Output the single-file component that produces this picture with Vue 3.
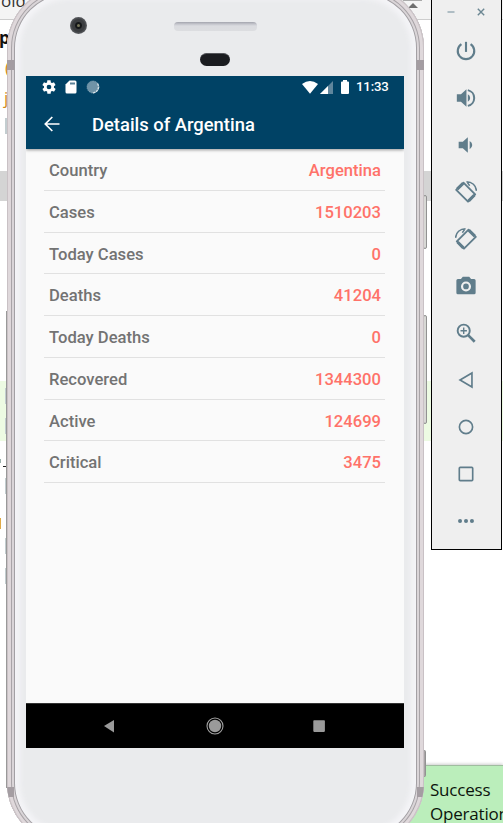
<script setup>
const stats = [
  ['Country', 'Argentina'],
  ['Cases', '1510203'],
  ['Today Cases', '0'],
  ['Deaths', '41204'],
  ['Today Deaths', '0'],
  ['Recovered', '1344300'],
  ['Active', '124699'],
  ['Critical', '3475'],
]
</script>

<template>
  <main class="desktop">
    <!-- Editor window behind the emulator -->
    <section class="editor">
      <div class="tabstrip"><span>old</span></div>
      <div class="code"></div>
      <div class="band gray"></div>
      <div class="gap"></div>
      <div class="band green"></div>
    </section>
    <span class="frag bold">p</span>
    <span class="frag amber paren">(</span>
    <span class="frag amber jay">j</span>
    <i class="mark m1"></i><i class="mark m2"></i><i class="mark m3"></i>
    <i class="mark m4"></i><i class="mark m5"></i><i class="mark m6"></i>
    <i class="dash"></i><i class="tick"></i><i class="amberbit"></i><i class="divider"></i>
    <svg class="collapse" width="22" height="10" viewBox="0 0 22 10">
      <path d="M3 .5h19" stroke="#aaa" />
      <path d="M8 8l5-5 5 5z" fill="#6e6e6e" />
    </svg>
    <aside class="toast">Success<br>Operation</aside>

    <!-- Phone -->
    <i class="key k1"></i><i class="key k2"></i><i class="key k3"></i>
    <section class="phone">
      <i class="antenna tl"></i><i class="antenna tr"></i>
      <i class="antenna bl"></i><i class="antenna br"></i>
    </section>
    <div class="camera"><i></i></div>
    <div class="speaker"></div>
    <div class="sensor"></div>

    <section class="screen">
      <header class="header">
        <div class="status">
          <svg class="s-gear" width="16" height="16" viewBox="0 0 24 24"><path fill="#fff" d="M19.4 13c0-.3.1-.6.1-1s0-.7-.1-1l2.100-1.600c.2-.2.2-.4.1-.6l-2-3.500c-.1-.2-.4-.3-.6-.2l-2.500 1c-.5-.4-1.100-.7-1.700-1L14.400 2.400c0-.2-.2-.4-.5-.4h-4c-.2 0-.4.2-.5.4L9.100 5.100c-.6.3-1.200.6-1.700 1l-2.500-1c-.2-.1-.5 0-.6.2l-2 3.500c-.1.2-.1.5.1.6L4.600 11c0 .3-.1.600-.1 1s0 .7.1 1l-2.100 1.600c-.2.2-.2.4-.1.6l2 3.500c.1.2.4.3.6.2l2.500-1c.5.4 1.100.7 1.700 1l.3 2.700c.1.2.3.4.5.4h4c.3 0 .5-.2.5-.4l.4-2.700c.6-.3 1.200-.6 1.700-1l2.500 1c.2.1.5 0 .6-.2l2-3.500c.1-.2.1-.4-.1-.6zM12 15.500a3.500 3.500 0 1 1 0-7 3.500 3.500 0 0 1 0 7z" /></svg>
          <svg class="s-sd" width="12" height="14" viewBox="0 0 12 14"><path d="M4.500.5H10q1.500 0 1.500 1.500v10q0 1.500-1.500 1.500H2Q.5 13.500.5 12V4.500z" fill="#fff" /><path d="M5 2.500h5V4.500H5z" fill="#5b8299" /></svg>
          <svg class="s-sync" width="14" height="14" viewBox="0 0 14 14"><circle cx="7" cy="7" r="6" fill="#6f93a7" /><path d="M11.500 3.500A6 6 0 0 1 6 12.800" fill="none" stroke="#dfe8ec" stroke-width="1.300" stroke-dasharray="2.500 .8" /><circle cx="7" cy="7" r="6" fill="none" stroke="#a8bfcb" stroke-width=".7" stroke-dasharray="1 1" /></svg>
          <span class="spacer"></span>
          <svg class="s-wifi" width="16" height="13" viewBox="0 0 16 13"><path d="M0 3Q8-2.800 16 3L8 12.800z" fill="#fff" /></svg>
          <svg class="s-cell" width="13" height="13" viewBox="0 0 13 13"><path d="M0 13L13 0v13z" fill="#5f869d" /><path d="M0 13L8 5v8z" fill="#fff" /></svg>
          <svg class="s-batt" width="8" height="14" viewBox="0 0 8 14"><path d="M2 0h4v1.500h1q1 0 1 1V13q0 1-1 1H1q-1 0-1-1V2.500q0-1 1-1h1z" fill="#fff" /></svg>
          <time>11:33</time>
        </div>
        <div class="appbar">
          <svg width="16" height="16" viewBox="0 0 16 16" fill="none" stroke="#fff" stroke-width="1.700"><path d="M15.500 8H2M8.300 1L1.300 8l7 7" /></svg>
          <h1>Details of Argentina</h1>
        </div>
      </header>
      <div class="list">
        <div v-for="[label, value] in stats" :key="label" class="row">
          <span>{{ label }}</span><b>{{ value }}</b>
        </div>
      </div>
      <nav class="nav">
        <svg width="18" height="18" viewBox="0 0 18 18"><path d="M3 9l10-6v12.500z" fill="#9a9a9a" /></svg>
        <svg width="18" height="18" viewBox="0 0 18 18"><circle cx="9" cy="9" r="8" fill="none" stroke="#a2a2a2" stroke-width="1.100" /><circle cx="9" cy="9" r="6.200" fill="#9a9a9a" /></svg>
        <svg width="18" height="18" viewBox="0 0 18 18"><rect x="3.300" y="3.300" width="11.600" height="11.600" rx=".8" fill="#9a9a9a" /></svg>
      </nav>
    </section>

    <!-- Emulator controls -->
    <aside class="tools">
      <div class="winbtns">
        <svg width="8" height="8" viewBox="0 0 8 8"><path d="M.5 4h7" stroke="#9fb1ba" stroke-width="1.600" /></svg>
        <svg width="8" height="8" viewBox="0 0 8 8"><path d="M.8.800l6.400 6.400M7.200.800L.8 7.200" stroke="#6c8793" stroke-width="1.400" /></svg>
      </div>
      <svg viewBox="0 0 24 24"><g fill="none" stroke="#607d8b" stroke-width="2.300"><path d="M12 2v11" /><path d="M7 4.400a9 9 0 1 0 10 0" /></g></svg>
      <svg viewBox="0 0 24 24"><path fill="#607d8b" d="M2 8h4.500L12.500 2.500v19L6.500 16H2zM14 8a4.400 4.400 0 0 1 0 8z" /><path d="M14 3.400a8.800 8.800 0 0 1 0 17.200" fill="none" stroke="#607d8b" stroke-width="2.200" /></svg>
      <svg viewBox="0 0 24 24"><path fill="#607d8b" d="M4 8.500h4.500L14 3.500v17l-5.500-5H4zM16 7.500a5 5 0 0 1 0 9z" /></svg>
      <svg viewBox="0 0 24 24"><g fill="none" stroke="#607d8b"><path stroke-width="2" d="M1.300 9.700L9.200 1.800 22 14.700 14.200 22.600z" stroke-linejoin="round" /><path stroke-width="3.400" d="M2.400 8.900l6.400-6.300M14.900 21.700l6.300-6.400" /><path stroke-width="1.600" d="M12.500.8c6 0 10.600 4.200 10.900 10M16 5.200l-2.800-4" /></g></svg>
      <svg viewBox="0 0 24 24"><g fill="none" stroke="#607d8b"><path stroke-width="2" d="M22.700 9.700L14.800 1.800 2 14.700 9.800 22.600z" stroke-linejoin="round" /><path stroke-width="3.400" d="M21.600 8.900l-6.400-6.300M9.100 21.700l-6.300-6.400" /><path stroke-width="1.600" d="M11.500.8C5.500.8.900 5 .6 10.800M8 5.200l2.800-4" /></g></svg>
      <svg viewBox="0 0 24 24"><path fill="#607d8b" d="M8.500 2h7l2 2.400h3.300q1.700 0 1.700 1.700v13.200q0 1.700-1.700 1.700H3.200q-1.700 0-1.700-1.700V6.100q0-1.700 1.700-1.700h3.300z" /><circle cx="12" cy="12.500" r="4.300" fill="none" stroke="#efefef" stroke-width="2.400" /></svg>
      <svg viewBox="0 0 24 24"><g fill="none" stroke="#607d8b"><circle cx="9.500" cy="9.500" r="6.600" stroke-width="2.100" /><path d="M14.300 14.300l7.200 7.200" stroke-width="2.900" /><path d="M6 9.500h7M9.500 6v7" stroke-width="1.500" /></g></svg>
      <svg viewBox="0 0 24 24"><path d="M5.500 12L18.500 4.300v15.400z" fill="none" stroke="#607d8b" stroke-width="1.800" /></svg>
      <svg viewBox="0 0 24 24"><circle cx="12" cy="12" r="7.200" fill="none" stroke="#607d8b" stroke-width="1.800" /></svg>
      <svg viewBox="0 0 24 24"><rect x="4.700" y="4.700" width="14.600" height="14.600" rx="1" fill="none" stroke="#607d8b" stroke-width="1.800" /></svg>
      <svg viewBox="0 0 24 24"><g fill="#607d8b"><circle cx="5.500" cy="12" r="2.200" /><circle cx="12" cy="12" r="2.200" /><circle cx="18.500" cy="12" r="2.200" /></g></svg>
    </aside>
  </main>
</template>

<style>
body { margin: 0; overflow: hidden; }
</style>

<style scoped>
* { box-sizing: border-box; }
svg { display: block; flex: none; }
.desktop { position: relative; width: 503px; height: 823px; overflow: hidden; background: #fff; font-family: Roboto, sans-serif; }
.editor { display: flex; flex-direction: column; }
.tabstrip { height: 20px; background: #f4f4f4; border-bottom: 1px solid #cdcdcd; font: 17px/20px "Open Sans", sans-serif; color: #333; }
.tabstrip span { display: block; margin: -9px 0 0 1px; }
.code { height: 151px; }
.band.gray { height: 30px; background: #d4d4d4; }
.gap { height: 180px; }
.band.green { height: 60px; background: #edfbe3; }
.frag { position: absolute; font: 17px/20px "Open Sans", sans-serif; }
.bold { left: -1px; top: 28px; font-weight: 700; color: #111; }
.amber { color: #d08a1c; }
.paren { left: 5px; top: 58px; }
.jay { left: 4px; top: 88px; }
.mark { position: absolute; left: 5px; width: 3px; height: 16px; background: #c3cdd0; }
.m1 { top: 118px; }
.m2 { top: 388px; }
.m3 { top: 418px; }
.m4 { top: 478px; }
.m5 { top: 538px; }
.m6 { top: 568px; }
.dash { position: absolute; left: 3px; top: 466px; width: 4px; height: 1px; background: #222; }
.tick { position: absolute; left: 0; top: 459px; width: 1px; height: 4px; background: #9bb0ac; }
.amberbit { position: absolute; left: 0; top: 518px; width: 1px; height: 11px; background: #e0aa48; }
.divider { position: absolute; left: 6px; top: 311px; width: 1px; height: 477px; background: #999; }
.collapse { position: absolute; left: 400px; top: 0; }
.toast { position: absolute; left: 400px; top: 765px; width: 103px; height: 58px; padding: 12px 0 0 30px; overflow: hidden; background: #bbeebb; border-top: 1px solid #9fbd9f; box-shadow: 0 -1px 3px #ccc; color: #0c140c; font: 17px/24px "Open Sans", sans-serif; letter-spacing: -.2px; }

.phone { position: absolute; left: 7px; top: -14px; width: 417px; height: 859px; border-radius: 62px; background: #eaebed; box-shadow: inset 0 0 0 1px #c9c1c5, inset 0 0 0 4px #dfd8db, inset 0 0 0 5px #a9a4a8, inset 0 0 0 7px #dad5d8, inset 0 0 0 8px #a3a0a4, inset 0 0 5px 13px #f4f4f7; overflow: hidden; }
.antenna { position: absolute; width: 7px; height: 10px; background: #a49da2; }
.tl { left: 0; top: 74px; }
.tr { right: 0; top: 74px; }
.bl { left: 0; bottom: 48px; }
.br { right: 0; bottom: 48px; }
.key { position: absolute; left: 423px; width: 4px; border: 1px solid #929292; border-radius: 2px; background: #d8d8d5; }
.k1 { top: 195px; height: 54px; }
.k2 { top: 315px; height: 109px; }
.k3 { top: 750px; height: 27px; width: 3px; background: #a9a4a6; }
.camera { position: absolute; left: 70px; top: 17px; width: 17px; height: 17px; border-radius: 50%; background: radial-gradient(circle, #151719 0 3px, #3b3d40 4px 6px, #55575b 8px); }
.camera i { position: absolute; left: 7px; top: 7px; width: 3px; height: 3px; border-radius: 50%; background: #77765b; }
.speaker { position: absolute; left: 174px; top: 22px; width: 83px; height: 9px; border-radius: 4px; background: linear-gradient(#a2a4ad 0, #c3c4cb 2px, #dbdce0 4px, #dcdde0); }
.sensor { position: absolute; left: 200px; top: 53px; width: 30px; height: 13px; border-radius: 7px; background: #1b1c20; border-top: 1px solid #55565b; }

.screen { position: absolute; left: 26px; top: 76px; width: 378px; height: 672px; display: flex; flex-direction: column; background: #fafafa; }
.header { height: 73px; background: #004265; color: #fff; box-shadow: 0 1px 3px rgba(0, 0, 0, .4); clip-path: inset(0 0 -6px 0); }
.status { display: flex; align-items: center; height: 22px; padding: 0 15px 0 16px; }
.s-gear { margin-left: -1px; }
.s-sd { margin-left: 8px; }
.s-sync { margin-left: 9px; }
.spacer { flex: 1; }
.s-wifi { margin-right: 2px; }
.s-batt { margin: 0 7px 0 8px; }
time { width: 33px; font-size: 13.2px; font-weight: 500; letter-spacing: -.15px; line-height: 22px; white-space: nowrap; }
.appbar { display: flex; align-items: center; height: 51px; padding-left: 18px; }
h1 { margin: 2px 0 0 32px; font-size: 18.4px; font-weight: 500; line-height: 24px; white-space: nowrap; }
.list { flex: 1; padding: 0 19px 0 18px; }
.row { display: flex; justify-content: space-between; align-items: center; height: 41.75px; padding: 2.500px 4px 0 5px; border-bottom: 1px solid #e1e1e1; font-size: 16.6px; font-weight: 500; color: #737373; }
.row b { font-weight: 500; color: #ff7269; }
.nav { display: flex; justify-content: space-between; align-items: center; height: 45px; padding: 0 76px 0 75px; background: #000; border-top: 1px solid #333; }

.tools { position: absolute; left: 431px; top: -1px; width: 71px; height: 551px; padding: 9px 1px 0 0; display: flex; flex-direction: column; align-items: center; gap: 25px; background: #efefef; border: 1px solid #000; }
.tools > svg { width: 22px; height: 22px; }
.winbtns { display: flex; gap: 22px; height: 8px; margin: -1px 0 -1px; }
</style>
